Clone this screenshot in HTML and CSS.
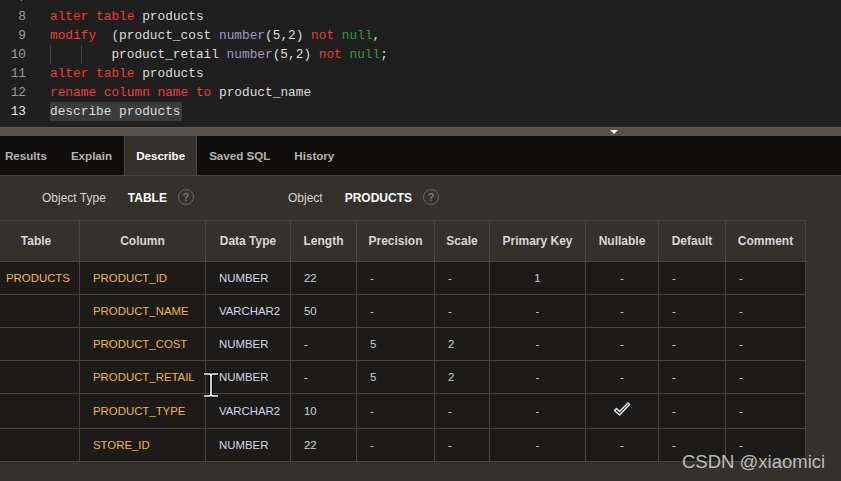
FILE: index.html
```html
<!DOCTYPE html>
<html>
<head>
<meta charset="utf-8">
<link rel="stylesheet" href="styles.css">
</head>
<body>
<div class="editor">
  <div class="lines">
    <div class="line"><span class="ln">7</span><span class="code"></span></div>
    <div class="line"><span class="ln">8</span><span class="code"><span class="kw">alter table</span> products</span></div>
    <div class="line"><span class="ln">9</span><span class="code"><span class="kw">modify</span>  (product_cost <span class="ty">number</span>(5,2) <span class="kw">not</span> <span class="nl">null</span>,</span></div>
    <div class="line"><span class="ln">10</span><span class="code"><span class="guide"></span><span class="guide"></span>product_retail <span class="ty">number</span>(5,2) <span class="kw">not</span> <span class="nl">null</span>;</span></div>
    <div class="line"><span class="ln">11</span><span class="code"><span class="kw">alter table</span> products</span></div>
    <div class="line"><span class="ln">12</span><span class="code"><span class="kw">rename column name to</span> product_name</span></div>
    <div class="line current"><span class="ln">13</span><span class="code"><span class="sel">describe products</span></span></div>
  </div>
</div>
<div class="splitter"><span class="arrow"></span></div>
<div class="tabs">
  <span class="tab">Results</span>
  <span class="tab">Explain</span>
  <span class="tab active">Describe</span>
  <span class="tab">Saved SQL</span>
  <span class="tab">History</span>
</div>
<div class="panel">
  <div class="info">
    <div class="group">
      <span class="label">Object Type</span>
      <span class="value">TABLE</span>
      <span class="help">?</span>
    </div>
    <div class="group">
      <span class="label">Object</span>
      <span class="value">PRODUCTS</span>
      <span class="help">?</span>
    </div>
  </div>
  <table class="desc">
    <colgroup>
      <col class="c1"><col class="c2"><col class="c3"><col class="c4"><col class="c5">
      <col class="c6"><col class="c7"><col class="c8"><col class="c9"><col class="c10">
    </colgroup>
    <thead>
      <tr>
        <th>Table</th><th>Column</th><th>Data Type</th><th>Length</th><th>Precision</th>
        <th>Scale</th><th>Primary Key</th><th>Nullable</th><th>Default</th><th>Comment</th>
      </tr>
    </thead>
    <tbody>
      <tr>
        <td class="name">PRODUCTS</td><td class="name">PRODUCT_ID</td><td class="dt">NUMBER</td><td>22</td><td>-</td>
        <td>-</td><td class="ctr">1</td><td class="ctr">-</td><td>-</td><td>-</td>
      </tr>
      <tr>
        <td></td><td class="name">PRODUCT_NAME</td><td class="dt">VARCHAR2</td><td>50</td><td>-</td>
        <td>-</td><td class="ctr">-</td><td class="ctr">-</td><td>-</td><td>-</td>
      </tr>
      <tr>
        <td></td><td class="name">PRODUCT_COST</td><td class="dt">NUMBER</td><td>-</td><td>5</td>
        <td>2</td><td class="ctr">-</td><td class="ctr">-</td><td>-</td><td>-</td>
      </tr>
      <tr>
        <td></td><td class="name">PRODUCT_RETAIL</td><td class="dt">NUMBER</td><td>-</td><td>5</td>
        <td>2</td><td class="ctr">-</td><td class="ctr">-</td><td>-</td><td>-</td>
      </tr>
      <tr class="tall">
        <td></td><td class="name">PRODUCT_TYPE</td><td class="dt">VARCHAR2</td><td>10</td><td>-</td>
        <td>-</td><td class="ctr">-</td><td class="ctr"><svg class="check" width="18" height="16" viewBox="0 0 18 16"><path d="M1.5 9.5 L3.5 7.5 L6.5 10.5 L15 2 L16.5 3.5 L6.5 14 Z" fill="#1c1b1a" stroke="#f4f4f4" stroke-width="1.3" stroke-linejoin="round"/></svg></td><td>-</td><td>-</td>
      </tr>
      <tr>
        <td></td><td class="name">STORE_ID</td><td class="dt">NUMBER</td><td>22</td><td>-</td>
        <td>-</td><td class="ctr">-</td><td class="ctr">-</td><td>-</td><td>-</td>
      </tr>
    </tbody>
  </table>
</div>
<svg class="ibeam" width="16" height="26" viewBox="0 0 16 26">
  <path d="M1 2 H6 M10 2 H15 M8 2 V24 M1 24 H6 M10 24 H15 M6 2 Q8 2 8 4 M10 2 Q8 2 8 4 M6 24 Q8 24 8 22 M10 24 Q8 24 8 22" stroke="#000" stroke-width="3.5" fill="none"/>
  <path d="M1 2 H6 M10 2 H15 M8 2 V24 M1 24 H6 M10 24 H15 M6 2 Q8 2 8 4 M10 2 Q8 2 8 4 M6 24 Q8 24 8 22 M10 24 Q8 24 8 22" stroke="#fff" stroke-width="1.6" fill="none"/>
</svg>
<div class="watermark">CSDN @xiaomici</div>
</body>
</html>
```
FILE: styles.css
```css
html, body {
  margin: 0;
  padding: 0;
}
body {
  width: 841px;
  height: 481px;
  overflow: hidden;
  background: #34302c;
  position: relative;
  font-family: "Liberation Sans", Arial, sans-serif;
}
.editor {
  height: 127px;
  background: #1f1f1f;
  overflow: hidden;
  font-family: "Liberation Mono", "DejaVu Sans Mono", monospace;
  font-size: 12.8px;
  color: #dcdcdc;
}
.lines {
  margin-top: -12.5px;
}
.line {
  display: flex;
  height: 19px;
  line-height: 19px;
  white-space: pre;
}
.ln {
  width: 26px;
  text-align: right;
  color: #9a9a9a;
  margin-right: 24px;
  flex: none;
}
.current .ln {
  color: #e6e6e6;
}
.code {
  display: block;
  white-space: pre;
}
.kw { color: #ee3b3b; }
.ty { color: #a495c8; }
.nl { color: #2f9a48; }
.guide {
  display: inline-block;
  width: 4ch;
  height: 19px;
  vertical-align: top;
  border-left: 1px solid #454545;
  box-sizing: border-box;
}
.sel {
  background: #3a3b3c;
  padding: 2px 1px 2px 0;
}
.splitter {
  height: 8px;
  background: #565049;
  border-top: 1px solid #605a53;
  display: flex;
  align-items: center;
  padding-left: 610px;
}
.arrow {
  width: 0;
  height: 0;
  border-left: 4px solid transparent;
  border-right: 4px solid transparent;
  border-top: 4px solid #f2f2f2;
  margin-top: -1px;
}
.tabs {
  height: 39px;
  background: #0f0e0c;
  border-bottom: 1px solid #4a4541;
  display: flex;
  margin-left: -7px;
}
.tab {
  display: flex;
  align-items: center;
  padding: 0 12px;
  font-size: 11.6px;
  font-weight: bold;
  color: #b4b2b0;
}
.tab.active {
  background: #34302c;
  color: #ffffff;
  padding: 0 11px;
  border-left: 1px solid #4a4541;
  border-right: 1px solid #4a4541;
}
.panel {
  background: #34302c;
}
.info {
  height: 44px;
  display: flex;
  align-items: center;
  padding-left: 42px;
  font-size: 12px;
}
.group {
  display: flex;
  align-items: center;
  width: 246px;
}
.label {
  color: #d4d2d0;
  margin-right: 22px;
}
.value {
  color: #ffffff;
  font-weight: bold;
  margin-right: 11px;
}
.help {
  width: 14px;
  height: 14px;
  border: 1.5px solid #6c6864;
  border-radius: 50%;
  color: #7a7672;
  font-size: 11px;
  font-weight: bold;
  display: flex;
  align-items: center;
  justify-content: center;
  margin-top: -2px;
}
.desc {
  margin-left: -8px;
  border-collapse: collapse;
  table-layout: fixed;
  width: 813px;
  font-size: 11.4px;
}
.c1 { width: 87px; }
.c2 { width: 126px; }
.c3 { width: 85px; }
.c4 { width: 66px; }
.c5 { width: 78px; }
.c6 { width: 55px; }
.c7 { width: 96px; }
.c8 { width: 73px; }
.c9 { width: 67px; }
.c10 { width: 80px; }
.desc th, .desc td {
  border: 1px solid #4a4541;
  padding: 0 0 0 13px;
  white-space: nowrap;
  overflow: hidden;
}
.desc th {
  height: 40px;
  background: #34302c;
  color: #d8d6d4;
  font-size: 12px;
  font-weight: bold;
  text-align: center;
  padding: 0;
}
.desc td {
  height: 32px;
  background: #1c1b1a;
  color: #cfcfcf;
  text-align: left;
}
.desc tr.tall td {
  height: 34px;
}
.desc td.name {
  color: #f3b73a;
}
.desc td.dt {
  color: #d3d8e2;
}
.desc td.ctr {
  text-align: center;
  padding: 0;
}
.check {
  display: block;
  margin: -4px auto 0;
}
.ibeam {
  position: absolute;
  left: 203px;
  top: 372px;
}
.watermark {
  position: absolute;
  left: 682px;
  top: 451px;
  font-family: "Liberation Sans", Arial, sans-serif;
  font-size: 18.5px;
  color: rgba(215, 215, 215, 0.85);
}
```
